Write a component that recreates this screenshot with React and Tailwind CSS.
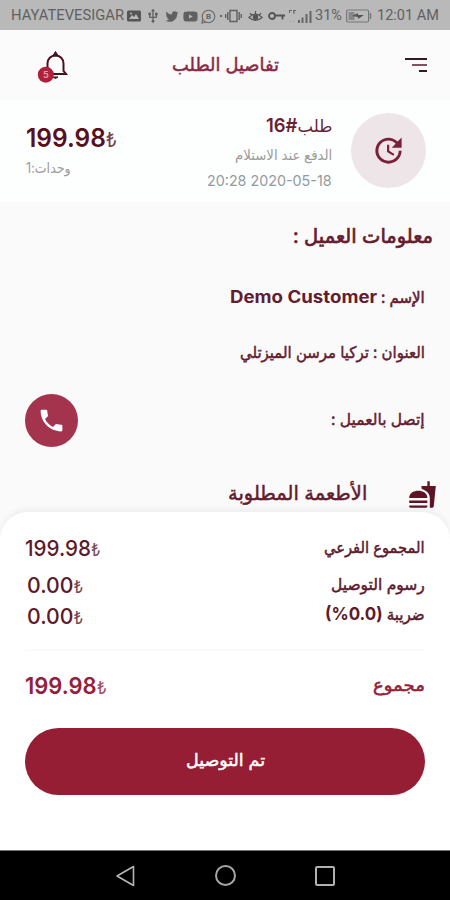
import { useLayoutEffect, useRef } from "react";
import { MdUpdate, MdPhone, MdFastfood, MdUsb } from "react-icons/md";
import { FaTwitter, FaYoutube } from "react-icons/fa";

// Single line of text stretched or condensed to the width of its box.
function Fit({ className = "", dir = "rtl", children }) {
  const box = useRef(null);
  const line = useRef(null);
  useLayoutEffect(() => {
    const ratio = box.current.clientWidth / line.current.offsetWidth;
    line.current.style.transform = `scaleX(${ratio})`;
  }, []);
  return (
    <div dir="ltr" className={`flex shrink-0 whitespace-nowrap ${className}`}>
      <div ref={box} className="flex w-full">
        <span ref={line} dir={dir} className="inline-block origin-left shrink-0">
          {children}
        </span>
      </div>
    </div>
  );
}

function Price({ amount, className }) {
  return (
    <Fit dir="ltr" className={className}>
      {amount}
      <span className="text-[0.78em] font-normal opacity-80">₺</span>
    </Fit>
  );
}

function StatusBar() {
  return (
    <div className="flex h-[30px] items-center bg-[#b9b9b9] pl-[11px] pt-0.5 font-['Roboto',sans-serif] text-[#606060]">
      <Fit dir="ltr" className="w-[113px] text-[14.5px]">HAYATEVESIGAR</Fit>
      <svg className="ml-[3px] h-3 w-3.5" viewBox="0 0 14 12">
        <rect width="14" height="11" y="0.5" rx="1.5" fill="#555" />
        <path d="M2 9l3-4 2 2 2-3 3 5z" fill="#b9b9b9" />
        <circle cx="4" cy="3.5" r="1" fill="#b9b9b9" />
      </svg>
      <MdUsb className="ml-1 h-4 w-4" />
      <FaTwitter className="ml-1 h-[13px] w-[14px]" />
      <FaYoutube className="ml-1 h-[15px] w-[15px]" />
      <svg className="ml-[3px] h-[15px] w-[15px]" viewBox="0 0 15 15" fill="none" stroke="#666" strokeWidth="1.1">
        <circle cx="7.5" cy="7.5" r="6.3" />
        <path d="M1.5 10.5L1 14l3.4-.8" />
        <text x="7.6" y="10.3" textAnchor="middle" fontSize="8" fontWeight="bold" fill="#666" stroke="none">B</text>
      </svg>
      <span className="ml-1 h-0.5 w-0.5 bg-[#666]" />
      <svg className="ml-[3px] h-[14px] w-[17px]" viewBox="0 0 17 14" fill="none" stroke="#606060" strokeWidth="1.400">
        <path d="M5 1.500h7v11H5zM2.800 3v8M14.200 3v8M.7 5v4M16.300 5v4" />
      </svg>
      <svg className="ml-[6px] h-[15px] w-[15px]" viewBox="0 0 16 15" fill="none" stroke="#555" strokeWidth="1.3">
        <path d="M1 8.5Q8 1.5 15 8.5Q8 14.5 1 8.5zM2 4l2 2M8 1.5v3M14 4l-2 2" />
        <circle cx="8" cy="8.3" r="2.3" fill="#555" />
      </svg>
      <svg className="ml-[5px] h-[10px] w-[17px]" viewBox="0 0 17 10" fill="none" stroke="#555" strokeWidth="1.800">
        <circle cx="4" cy="5" r="3" />
        <path d="M7 4.500h10M14.500 4.500v4" />
      </svg>
      <svg className="ml-[4px] h-[15px] w-[23px]" viewBox="0 0 23 15" fill="#666">
        <path d="M0 1h3v1H1v2H0zM4 1h3v1H5.5v3h-1zM9 11h2v3H9zM12.500 8.500h2v5.500h-2zM16.500 5h2v9h-2zM20.500 2h2v12h-2z" />
        <path d="M1 12h1v1H1zM4 12h1v1H4z" opacity=".4" />
      </svg>
      <Fit dir="ltr" className="ml-[3px] w-[27px] text-[14.5px]">31%</Fit>
      <svg className="ml-1 h-[14px] w-[26px]" viewBox="0 0 26 14" fill="none" stroke="#777">
        <rect x="0.6" y="1" width="22" height="12" rx="1.5" strokeWidth="1.2" />
        <path d="M2.500 3h6v8h-6z" fill="#888" stroke="none" />
        <path d="M6 7l6-3v2h6l-6 4V8z" fill="#555" stroke="none" />
        <path d="M24.500 4v6" strokeWidth="1.500" />
      </svg>
      <Fit dir="ltr" className="ml-[5px] w-[62px] text-[14.5px]">12:01 AM</Fit>
    </div>
  );
}

function Header() {
  return (
    <header className="flex h-[70px] items-center bg-[#fbfbfb] pl-9 pr-[23px]">
      <svg className="h-8 w-8 overflow-visible" viewBox="0 0 32 32">
        <path d="M11.500 23V14.500Q12 7 19.500 6.500Q27 7 27.500 14.500V22L30 25H12" fill="none" stroke="#4a1020" strokeWidth="2" />
        <path d="M17 6.500l2.500-4 2.500 4zM17 28h5l-2.500 1.500z" fill="#4a1020" stroke="#4a1020" />
        <circle cx="9.800" cy="25.700" r="8" fill="#b01f3b" />
        <text x="9.800" y="29" textAnchor="middle" fontSize="9" fontWeight="bold" fontFamily="Inter" fill="#e39aa8">5</text>
      </svg>
      <Fit className="-mt-px ml-[104px] w-[107px] text-[18px] leading-[30px] text-[#8d2844] [-webkit-text-stroke:0.5px]">تفاصيل الطلب</Fit>
      <div className="ml-auto flex flex-col items-end gap-[4px]">
        <span className="h-[2px] w-[22px] bg-[#361722]" />
        <span className="h-[2px] w-[15px] bg-[#84505f]" />
        <span className="h-[2px] w-[8px] bg-[#361722]" />
      </div>
    </header>
  );
}

function Order() {
  return (
    <section className="flex h-[102px] justify-between bg-[#fdfefe] pl-[26px] pr-6 shadow-[0_2px_4px_rgba(0,0,0,0.04)]">
      <div className="flex flex-col pt-[23px]">
        <Price amount="199.98" className="h-[30px] w-[91px] text-[25px] font-semibold leading-[30px] text-[#56101f]" />
        <Fit className="mt-[3px] h-6 w-[45px] text-[14px] leading-6 text-[#9b9b9b]">وحدات:1</Fit>
      </div>
      <div className="flex">
        <div className="flex flex-col items-end pt-3">
          <Fit className="h-[28px] w-[66px] text-[19px] font-semibold leading-[28px] text-[#6c1e31]">
            <span className="text-[17px] font-normal">طلب</span>#16
          </Fit>
          <Fit className="mt-0.5 h-[26px] w-[97px] text-[14px] leading-[25px] text-[#9b9b9b]">الدفع عند الاستلام</Fit>
          <Fit dir="ltr" className="h-[25px] w-[125px] text-[15px] leading-[26px] text-[#939ba1]">20:28 2020-05-18</Fit>
        </div>
        <div className="ml-[19px] mt-[13px] flex h-[75px] w-[75px] items-center justify-center rounded-full bg-[#ede5e8]">
          <MdUpdate className="h-[35px] w-[35px] text-[#7b2039]" />
        </div>
      </div>
    </section>
  );
}

function Customer() {
  return (
    <section className="flex h-[310px] flex-col items-end bg-[#fafafa] pr-[25px] text-[#641c2f]">
      <Fit className="-mr-2 mt-[16px] h-9 w-[140px] text-[20px] leading-9 [-webkit-text-stroke:0.7px]">معلومات العميل :</Fit>
      <div className="mt-[28px] flex h-[30px] items-center">
        <Fit dir="ltr" className="w-[147px] text-[17px] font-bold leading-[30px]">Demo Customer</Fit>
        <Fit className="ml-1 w-[44px] text-[16px] leading-[28px] [-webkit-text-stroke:0.6px]">الإسم :</Fit>
      </div>
      <Fit className="mt-[25px] h-[30px] w-[185px] text-[16px] leading-[30px] [-webkit-text-stroke:0.5px]">العنوان : تركيا مرسن الميزتلي</Fit>
      <div className="mt-[26px] flex h-[54px] w-[400px] items-center justify-between">
        <div className="flex h-[53px] w-[53px] items-center justify-center rounded-full bg-[#a4344e]">
          <MdPhone className="h-[29px] w-[29px] text-white" />
        </div>
        <Fit className="-mt-[3px] w-[94px] text-[16px] leading-[30px] [-webkit-text-stroke:0.5px]">إتصل بالعميل :</Fit>
      </div>
      <div className="-mr-3 mt-[29px] flex h-9 items-center">
        <Fit className="-mt-[3px] w-[139px] text-[20px] leading-9 [-webkit-text-stroke:0.5px]">الأطعمة المطلوبة</Fit>
        <MdFastfood className="ml-[41px] h-[29px] w-[29px] text-[#5d1426]" />
      </div>
    </section>
  );
}

function Summary() {
  return (
    <section className="relative flex h-[338px] flex-col rounded-t-[28px] bg-white px-[25px] pt-[20px] text-[#5c1a2b] shadow-[0_-3px_6px_rgba(0,0,0,0.05)]">
      <div className="flex h-[32px] items-center justify-between">
        <Price amount="199.98" className="w-[76px] text-[22px] font-medium" />
        <Fit className="-mt-[3px] w-[101px] text-[16px] [-webkit-text-stroke:0.5px]">المجموع الفرعي</Fit>
      </div>
      <div className="mt-[6px] flex h-[30px] items-center justify-between">
        <Price amount="0.00" className="ml-0.5 w-[56px] text-[22px] font-medium" />
        <Fit className="-mt-[2px] w-[94px] text-[16px] [-webkit-text-stroke:0.5px]">رسوم التوصيل</Fit>
      </div>
      <div className="flex h-[32px] items-center justify-between">
        <Price amount="0.00" className="ml-0.5 w-[56px] text-[22px] font-medium" />
        <Fit className="-mt-[5px] w-[100px] text-[18px] font-bold">
          <span className="text-[16px] font-normal [-webkit-text-stroke:0.5px]">ضريبة</span> (0.0%)
        </Fit>
      </div>
      <div className="mt-[17px] h-0.5 bg-[#fafafa]" />
      <div className="mt-[17px] flex h-[36px] items-center justify-between text-[#96203a]">
        <Price amount="199.98" className="w-[82px] text-[22.500px] font-semibold" />
        <Fit className="w-[52px] text-[17px] [-webkit-text-stroke:0.6px]">مجموع</Fit>
      </div>
      <button className="mt-[24px] flex h-[67px] items-center justify-center rounded-full bg-[#951d34] text-white">
        <Fit className="-mt-[2px] w-[79px] text-[17px] [-webkit-text-stroke:0.5px]">تم التوصيل</Fit>
      </button>
    </section>
  );
}

function NavBar() {
  return (
    <nav className="flex h-[50px] items-center justify-between border-t border-[#777] bg-black px-[115px]">
      <svg className="h-[22px] w-[20px]" viewBox="0 0 20 22" fill="none" stroke="#b5b5b5" strokeWidth="1.6" strokeLinejoin="round">
        <path d="M2 11L18.500 1.500v19z" />
      </svg>
      <span className="h-[21px] w-[21px] rounded-full border-2 border-[#a5a5a5]" />
      <span className="h-[20px] w-[20px] rounded-[2px] border-2 border-[#b0b0b0]" />
    </nav>
  );
}

export default function App() {
  return (
    <main className="flex h-[900px] w-[450px] flex-col overflow-hidden bg-[#fafafa] font-['Inter','DejaVu_Sans',sans-serif]">
      <StatusBar />
      <Header />
      <Order />
      <Customer />
      <Summary />
      <NavBar />
    </main>
  );
}
